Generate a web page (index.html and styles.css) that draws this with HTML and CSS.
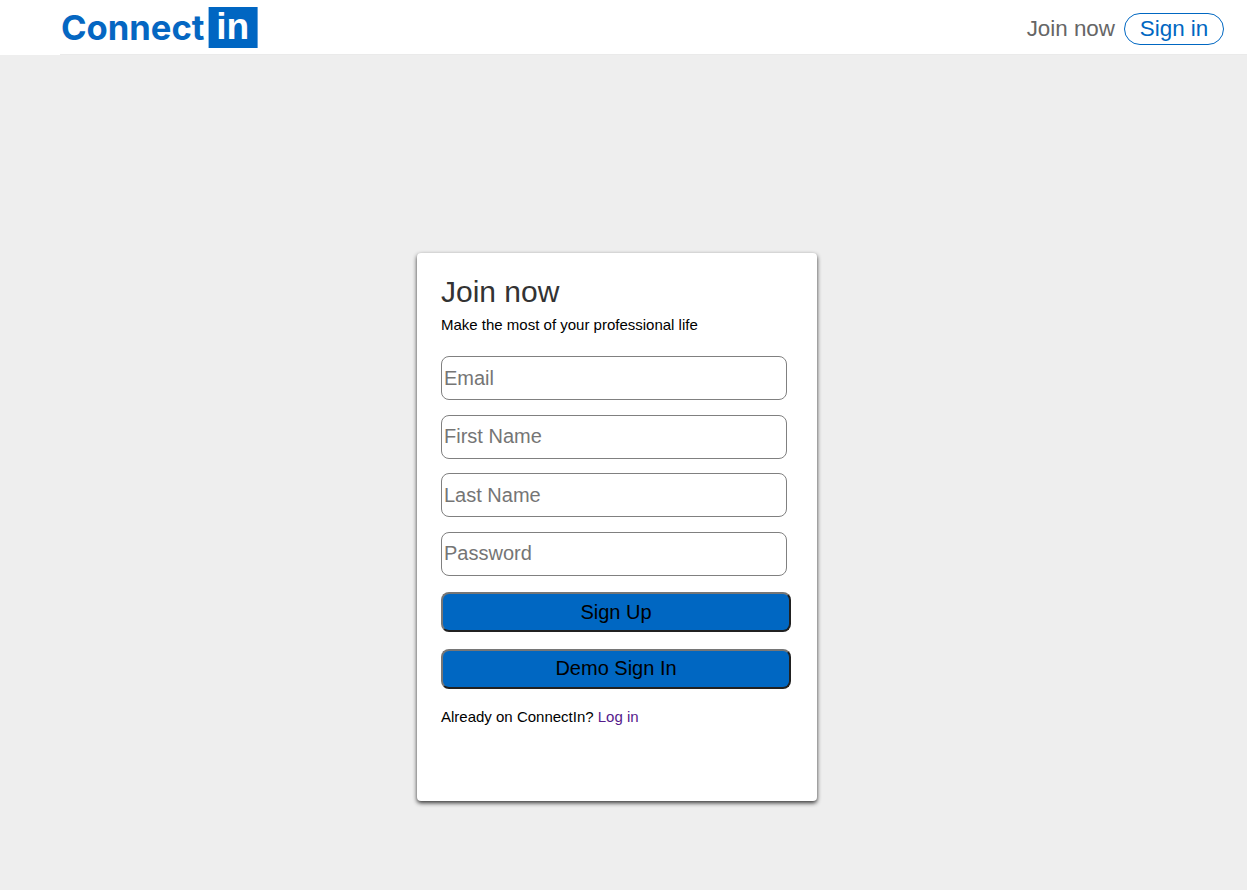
FILE: index.html
```html
<!DOCTYPE html>
<html lang="en">
<head>
<meta charset="utf-8">
<title>ConnectIn</title>
<link rel="stylesheet" href="styles.css">
</head>
<body>
<header class="nav">
  <svg class="logo" width="200" height="54" viewBox="0 0 200 54" role="img" aria-label="Connect in">
    <text class="logo-word" x="0" y="39.5" textLength="143.5" lengthAdjust="spacingAndGlyphs">Connect</text>
    <rect class="logo-box" x="147.6" y="7" width="49" height="41"/>
    <text class="logo-in" x="155.2" y="38.5" textLength="33" lengthAdjust="spacingAndGlyphs">in</text>
  </svg>
  <nav class="nav-links">
    <a class="join-link">Join now</a>
    <a class="signin-link">Sign in</a>
  </nav>
</header>
<main class="page">
  <form class="card">
    <h1 class="title">Join now</h1>
    <p class="subtitle">Make the most of your professional life</p>
    <div class="fields">
      <input class="field" type="text" placeholder="Email">
      <input class="field" type="text" placeholder="First Name">
      <input class="field" type="text" placeholder="Last Name">
      <input class="field" type="password" placeholder="Password">
    </div>
    <div class="actions">
      <button class="btn btn-primary" type="button">Sign Up</button>
      <button class="btn" type="button">Demo Sign In</button>
    </div>
    <p class="login">Already on ConnectIn? <a class="login-link">Log in</a></p>
  </form>
</main>
</body>
</html>
```
FILE: styles.css
```css
* { box-sizing: border-box; }
body {
  margin: 0;
  min-height: 890px;
  background: #eee;
  font-family: "Liberation Sans", Arial, Helvetica, sans-serif;
  color: #000;
}
.nav {
  display: flex;
  justify-content: space-between;
  height: 55px;
  padding: 0 23px 0 61px;
  background: linear-gradient(#eaeaea, #eaeaea) 60px 54px no-repeat #fff;
}
.logo { display: block; }
.logo-word { font-family: Inter, sans-serif; font-weight: 650; font-size: 34.5px; fill: #0567c2; }
.logo-box { fill: #0066c2; }
.logo-in { font-family: "Liberation Sans", sans-serif; font-weight: 700; font-size: 36.5px; fill: #fff; }
.nav-links {
  display: flex;
  align-items: center;
  gap: 9px;
  height: 58px;
  font-size: 22.4px;
}
.join-link { color: #666; }
.signin-link {
  width: 100px;
  height: 32px;
  border: 1px solid #0067c2;
  border-radius: 16px;
  color: #0067c2;
  line-height: 29px;
  text-align: center;
}
.page { padding-top: 198px; }
.card {
  width: 400px;
  height: 548px;
  margin-left: 417px;
  padding: 22px 24px;
  border-radius: 4px;
  background: #fff;
  box-shadow: 0 2px 4px #333;
}
.title {
  margin: 0;
  color: #333;
  font-size: 30px;
  font-weight: 400;
  line-height: 34px;
}
.subtitle { margin: 7px 0 0; font-size: 15px; line-height: 18px; }
.fields {
  display: flex;
  flex-direction: column;
  gap: 14.6px;
  margin-top: 22px;
}
.field {
  width: 346px;
  height: 44px;
  padding: 1px 2px;
  border: 1px solid #808080;
  border-radius: 8px;
  background: #fff;
  font: 20px "Liberation Sans", Arial, sans-serif;
}
.field::placeholder { color: #757575; opacity: 1; }
.actions {
  display: flex;
  flex-direction: column;
  gap: 17px;
  margin-top: 16.2px;
}
.btn {
  width: 350px;
  height: 40px;
  padding: 0 0 1px;
  border: 2px solid;
  border-color: #767676 #212121 #212121 #767676;
  border-radius: 8px;
  background: #0067c2;
  color: #000;
  font: 20px "Liberation Sans", Arial, sans-serif;
}
.btn-primary { padding: 1px 0 0; }
.login { margin: 19px 0 0; font-size: 15px; line-height: 18px; }
.login-link { color: #551a8b; }
```
